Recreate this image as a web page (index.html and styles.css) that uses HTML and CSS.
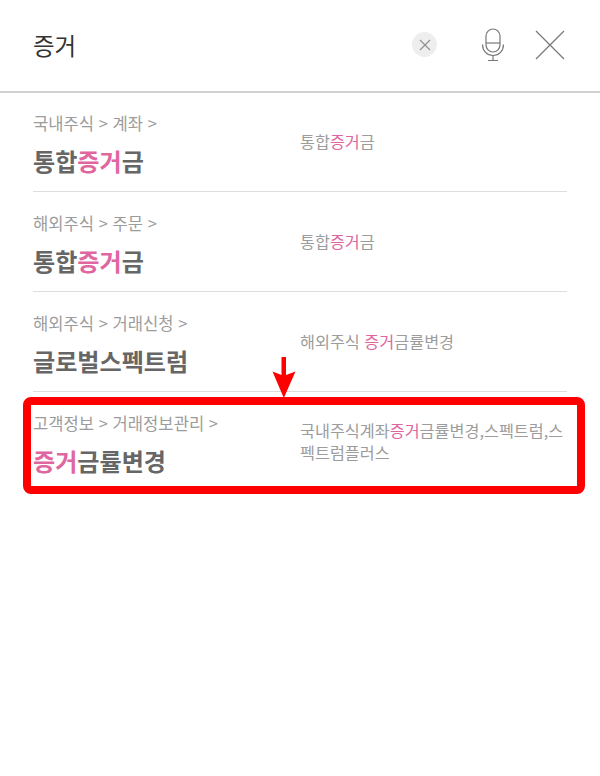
FILE: index.html
```html
<!DOCTYPE html>
<html lang="ko">
<head>
<meta charset="utf-8">
<title>검색</title>
<link rel="stylesheet" href="styles.css">
</head>
<body>
<header class="search">
  <div class="query">증거</div>
  <button class="clear" aria-label="지우기">
    <svg width="12" height="12" viewBox="0 0 12 12"><path d="M1 1L11 11M11 1L1 11" stroke="#8e8e8e" stroke-width="1.1" fill="none"/></svg>
  </button>
  <svg class="mic" width="24" height="34" viewBox="0 0 24 34" fill="none" stroke="#777" stroke-width="1.2">
    <rect x="5" y="1" width="14" height="23" rx="7"/>
    <path d="M5 15H19"/>
    <path d="M1.5 16.5C1.5 23 6 27.5 12 27.5S22.500 23 22.500 16.500"/>
    <path d="M12 27.500V32M7 32.500H17"/>
  </svg>
  <svg class="close" width="30" height="30" viewBox="0 0 30 30"><path d="M1 1L29 29M29 1L1 29" stroke="#777" stroke-width="1.2" fill="none"/></svg>
</header>
<main class="results">
  <article class="row">
    <div class="main">
      <div class="path">국내주식 &gt; 계좌 &gt;</div>
      <div class="title">통합<em>증거</em>금</div>
    </div>
    <div class="desc">통합<em>증거</em>금</div>
  </article>
  <article class="row">
    <div class="main">
      <div class="path">해외주식 &gt; 주문 &gt;</div>
      <div class="title">통합<em>증거</em>금</div>
    </div>
    <div class="desc">통합<em>증거</em>금</div>
  </article>
  <article class="row">
    <div class="main">
      <div class="path">해외주식 &gt; 거래신청 &gt;</div>
      <div class="title">글로벌스펙트럼</div>
    </div>
    <div class="desc">해외주식 <em>증거</em>금률변경</div>
  </article>
  <article class="row last">
    <div class="main">
      <div class="path">고객정보 &gt; 거래정보관리 &gt;</div>
      <div class="title"><em>증거</em>금률변경</div>
    </div>
    <div class="desc">국내주식계좌<em>증거</em>금률변경,스펙트럼,스펙트럼플러스</div>
    <div class="highlight"></div>
    <svg class="arrow" width="24" height="41" viewBox="0 0 24 41"><path d="M9.500 0H14V18L23.500 14.500L11.800 41L0.500 14.500L9.500 18Z" fill="#ff0000"/></svg>
  </article>
</main>
</body>
</html>
```
FILE: styles.css
```css
* { box-sizing: border-box; }
html, body { margin: 0; padding: 0; background: #fff; }
body {
  width: 600px;
  height: 776px;
  overflow: hidden;
  font-family: "Noto Sans CJK KR", "Noto Sans", sans-serif;
}
em { font-style: normal; color: #e0669f; }

.search {
  height: 93px;
  border-bottom: 2px solid #d0d0d0;
  display: flex;
  align-items: center;
  padding: 0 35px 2px 33px;
}
.query {
  flex: 1;
  font-size: 23.500px;
  line-height: 32px;
  color: #333;
}
.clear {
  width: 25px;
  height: 25px;
  padding: 0;
  border: 0;
  border-radius: 50%;
  background: #eee;
  display: flex;
  align-items: center;
  justify-content: center;
}
.mic { margin-left: 44px; }
.close { margin-left: 30px; }

.results { padding: 0 33px; margin-top: -1px; }
.row {
  position: relative;
  height: 100px;
  display: flex;
  align-items: center;
  border-bottom: 1px solid #ddd;
}
.row.last { border-bottom: 0; }
.main {
  width: 267px;
  flex: none;
  padding: 6px 0 2px;
}
.path {
  font-size: 16.600px;
  line-height: 24px;
  color: #9c9c9c;
}
.title {
  margin-top: 10px;
  font-size: 24.100px;
  line-height: 32px;
  font-weight: 700;
  color: #666;
}
.desc {
  flex: 1;
  margin-bottom: 2px;
  font-size: 16.250px;
  line-height: 22px;
  color: #9c9c9c;
  word-break: break-all;
}
.highlight {
  position: absolute;
  left: -10px;
  right: -18px;
  top: 5px;
  height: 97px;
  border: 8px solid #ff0000;
  border-radius: 8px;
}
.arrow {
  position: absolute;
  left: 239px;
  top: -35px;
}
```
